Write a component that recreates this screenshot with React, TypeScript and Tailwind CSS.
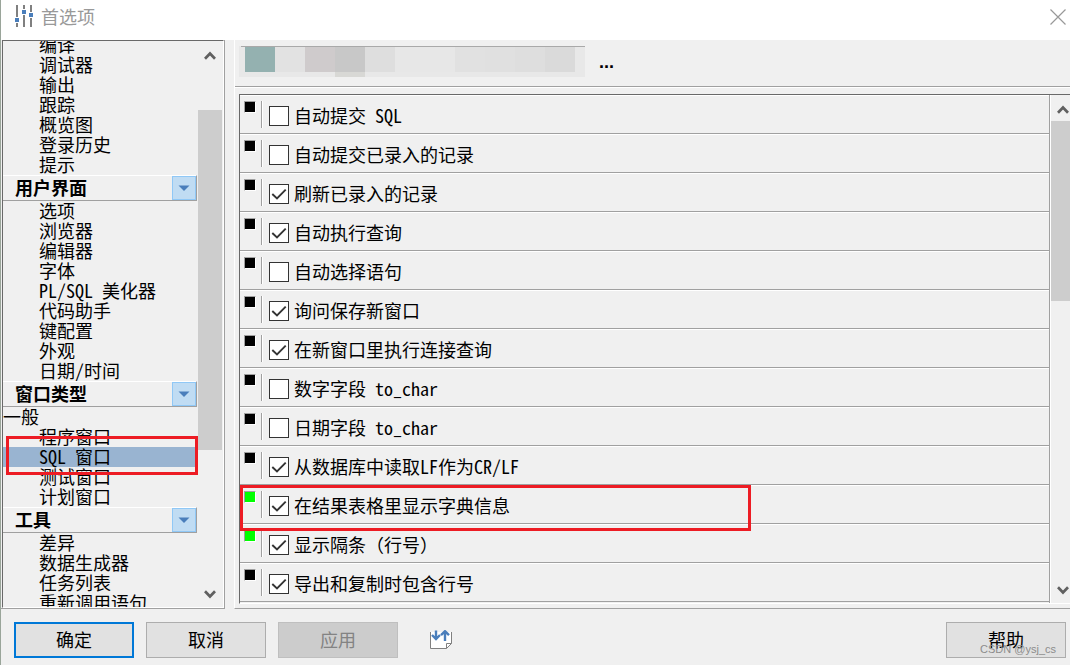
import { Fragment, type ReactNode } from "react";

type TreeEntry =
  | { kind: "group"; label: string }
  | { kind: "item"; label: string; root?: boolean; selected?: boolean };

const tree: TreeEntry[] = [
  { kind: "item", label: "编译" },
  { kind: "item", label: "调试器" },
  { kind: "item", label: "输出" },
  { kind: "item", label: "跟踪" },
  { kind: "item", label: "概览图" },
  { kind: "item", label: "登录历史" },
  { kind: "item", label: "提示" },
  { kind: "group", label: "用户界面" },
  { kind: "item", label: "选项" },
  { kind: "item", label: "浏览器" },
  { kind: "item", label: "编辑器" },
  { kind: "item", label: "字体" },
  { kind: "item", label: "PL/SQL 美化器" },
  { kind: "item", label: "代码助手" },
  { kind: "item", label: "键配置" },
  { kind: "item", label: "外观" },
  { kind: "item", label: "日期/时间" },
  { kind: "group", label: "窗口类型" },
  { kind: "item", label: "一般", root: true },
  { kind: "item", label: "程序窗口" },
  { kind: "item", label: "SQL 窗口", selected: true },
  { kind: "item", label: "测试窗口" },
  { kind: "item", label: "计划窗口" },
  { kind: "group", label: "工具" },
  { kind: "item", label: "差异" },
  { kind: "item", label: "数据生成器" },
  { kind: "item", label: "任务列表" },
  { kind: "item", label: "重新调用语句" },
];

const options = [
  { label: "自动提交 SQL", on: false },
  { label: "自动提交已录入的记录", on: false },
  { label: "刷新已录入的记录", on: true },
  { label: "自动执行查询", on: true },
  { label: "自动选择语句", on: false },
  { label: "询问保存新窗口", on: true },
  { label: "在新窗口里执行连接查询", on: true },
  { label: "数字字段 to_char", on: false },
  { label: "日期字段 to_char", on: false },
  { label: "从数据库中读取LF作为CR/LF", on: true },
  { label: "在结果表格里显示字典信息", on: true, changed: true, marked: true },
  { label: "显示隔条（行号）", on: true, changed: true },
  { label: "导出和复制时包含行号", on: true },
];

/* Latin runs use the font's half-width forms; Chinese punctuation stays full width. */
function Mixed({ text }: { text: string }) {
  return (
    <>
      {text.split(/([\x20-\x7e]+)/).map((part, i) =>
        i % 2 ? (
          <span key={i} className="[font-feature-settings:'hwid']">
            {part}
          </span>
        ) : (
          <Fragment key={i}>{part}</Fragment>
        ),
      )}
    </>
  );
}

function Chevron({ down = false }: { down?: boolean }) {
  return (
    <svg viewBox="0 0 12 10" className={down ? "h-[10px] w-3 rotate-180" : "h-[10px] w-3"} aria-hidden="true">
      <path d="M1 7.7 6 2.5 11 7.7" fill="none" stroke="#606060" strokeWidth="2.7" />
    </svg>
  );
}

function TreeRow({ entry }: { entry: TreeEntry }) {
  if (entry.kind === "group") {
    return (
      <li className="mr-px flex h-[26px] items-center justify-between border-t border-r border-b border-t-white border-r-[#a0a0a0] border-b-[#a0a0a0] pl-3">
        <span className="pb-[3px] font-bold">{entry.label}</span>
        <button
          type="button"
          aria-label={entry.label}
          className="flex h-6 w-6 items-center justify-center border border-[#90c8f6] bg-[#c0dcf3]"
        >
          <svg viewBox="0 0 12 6" className="h-[6px] w-3" aria-hidden="true">
            <path d="M0.5 0.5H11.5L6 6Z" fill="#4a7ebb" />
          </svg>
        </button>
      </li>
    );
  }
  return (
    <li className={entry.selected ? "relative mr-px bg-[#99b4d1]" : "mr-px"}>
      <a href="#" className={entry.root ? "block h-5" : "block h-5 pl-9"}>
        <Mixed text={entry.label} />
      </a>
      {entry.selected && (
        <span className="pointer-events-none absolute -top-[11px] -right-px -bottom-2 left-[3px] border-3 border-[#ed1c24]" />
      )}
    </li>
  );
}

function OptionRow({ option, id }: { option: (typeof options)[number]; id: string }) {
  return (
    <li className="relative flex h-[39px] border-t border-b border-t-white border-b-[#a0a0a0] pl-1">
      <span
        className={
          option.changed
            ? "mt-[5px] size-3 border border-t-[#a0a0a0] border-r-white border-b-white border-l-[#a0a0a0] bg-[#00ff00]"
            : "mt-[5px] size-3 border border-t-[#a0a0a0] border-r-white border-b-white border-l-[#a0a0a0] bg-black"
        }
      />
      <span className="mt-[5px] ml-[5px] h-[27px] w-[2px] border-r border-l border-r-white border-l-[#a0a0a0]" />
      <span className="relative mt-[10px] ml-[6px] size-5">
        <input
          type="checkbox"
          id={id}
          defaultChecked={option.on}
          className="peer block size-5 appearance-none border border-[#333333] bg-white"
        />
        <svg
          viewBox="0 0 20 20"
          className="pointer-events-none absolute inset-0 size-5 opacity-0 peer-checked:opacity-100"
          aria-hidden="true"
        >
          <path d="M3.3 10 8 14.5 16.7 5.7" fill="none" stroke="#333333" strokeWidth="1.9" />
        </svg>
      </span>
      <label htmlFor={id} className="mt-[10px] ml-[5px] h-[18px]">
        <Mixed text={option.label} />
      </label>
      {option.marked && (
        <span className="pointer-events-none absolute -top-px left-0 z-10 h-[46px] w-[511px] border-3 border-[#ed1c24]" />
      )}
    </li>
  );
}

function DialogButton({ tone, children }: { tone: "primary" | "plain" | "disabled"; children: ReactNode }) {
  const look = {
    primary: "border-2 border-[#0078d7] bg-[#e1e1e1]",
    plain: "border border-[#adadad] bg-[#e1e1e1]",
    disabled: "border border-[#bfbfbf] bg-[#cccccc] text-[#838383]",
  }[tone];
  return (
    <button
      type="button"
      disabled={tone === "disabled"}
      className={`flex h-9 w-[120px] items-center justify-center pb-[3px] ${look}`}
    >
      {children}
    </button>
  );
}

export default function App() {
  return (
    <div className="flex h-screen flex-col overflow-hidden border-l border-[#9aa59a] bg-[#f0f0f0] font-['Noto_Sans_CJK_SC',sans-serif] text-[18px] leading-[18px] whitespace-pre text-black">
      <header className="flex h-10 shrink-0 items-center justify-between bg-white pr-1 pb-[6px] pl-[14px]">
        <div className="flex items-center gap-[8px]">
          <svg viewBox="0 0 18 22" className="mt-[-2px] h-[22px] w-[18px]" aria-hidden="true">
            <path d="M2 0V22M9 0V22M16 0V22" stroke="#808080" strokeWidth="2" />
            <path d="M-1 12H5V18H-1ZM6 4H12V10H6ZM13 7H19V13H13Z" fill="#fff" />
            <path d="M0 13H4V17H0ZM7 5H11V9H7ZM14 8H18V12H14Z" fill="#4a7ebb" />
          </svg>
          <h1 className="pb-[2px] text-[#999999]">首选项</h1>
        </div>
        <button type="button" aria-label="关闭" className="flex size-4 items-center justify-center">
          <svg viewBox="0 0 16 16" className="size-4" aria-hidden="true">
            <path d="M0.5 0.5 15.5 15.5M15.5 0.5 0.5 15.5" stroke="#999999" strokeWidth="1.2" />
          </svg>
        </button>
      </header>

      <div className="flex min-h-0 flex-1">
        <nav className="flex w-[224px] shrink-0 border-r border-b border-[#a0a0a0]">
          <div className="ml-px flex min-h-0 flex-1 border border-t-[#696969] border-r-white border-b-white border-l-[#696969]">
            <ul className="-mt-[6px] flex-1 self-stretch overflow-hidden [clip-path:inset(6px_0_0_0)]">
              {tree.map((entry) => (
                <TreeRow key={entry.label} entry={entry} />
              ))}
            </ul>
            <div className="flex w-[25px] flex-col items-center justify-between pt-[10px] pr-px pb-2">
              <Chevron />
              <div className="mt-[49px] h-[340px] w-6 bg-[#cdcdcd]" />
              <div className="flex flex-1 items-end">
                <Chevron down />
              </div>
            </div>
          </div>
        </nav>

        <main className="ml-[9px] flex min-w-0 flex-1 flex-col border-b border-l border-b-[#a0a0a0] border-l-white">
          <div className="flex h-[47px] shrink-0 border-b border-[#a0a0a0] pt-[6px] pl-1">
            <div className="flex h-[31px] w-[346px] flex-col bg-[#e8e8e8]">
              <div className="ml-[2px] h-px bg-[#a9a9a9]" />
              <div className="flex h-[25px] pl-[6px]">
                <span className="w-[30px] bg-[#94b1b0]" />
                <span className="w-[30px] bg-[#e2e2e2]" />
                <span className="w-[30px] bg-[#cfcbcc]" />
                <span className="w-[30px] bg-[#c8c8c8]" />
                <span className="w-[30px] bg-[#dedede]" />
                <span className="w-[60px] bg-[#e7e7e7]" />
                <span className="w-[30px] bg-[#e1e1e1]" />
                <span className="w-[30px] bg-[#e0e0e0]" />
                <span className="w-[30px] bg-[#dedede]" />
                <span className="w-[30px] bg-[#dadada]" />
              </div>
              <div className="ml-24 h-[5px] w-[30px] bg-[#d8d8d5]" />
            </div>
            <button
              type="button"
              className="ml-[14px] h-8 self-start font-['Liberation_Sans',sans-serif] font-bold"
            >
              ...
            </button>
          </div>
          <div className="min-h-0 flex-1 border-t border-white pt-[6px] pb-1 pl-1">
            <div className="flex h-full border-t border-b border-l border-t-[#696969] border-b-white border-l-[#696969]">
              <ul className="min-w-0 flex-1 border-r border-[#a0a0a0]">
                {options.map((option, i) => (
                  <OptionRow key={option.label} option={option} id={`option-${i}`} />
                ))}
              </ul>
              <div className="flex w-5 flex-col items-end justify-between border-l border-white py-[8px]">
                <div className="flex h-[18px] items-start pr-px pt-[2px]">
                  <Chevron />
                </div>
                <div className="h-[180px] w-full bg-[#cdcdcd]" />
                <div className="flex flex-1 items-end pr-px">
                  <Chevron down />
                </div>
              </div>
            </div>
          </div>
        </main>
      </div>

      <footer className="flex h-14 shrink-0 items-center justify-between pt-[6px] pr-1 pl-[13px]">
        <div className="flex items-center gap-3">
          <DialogButton tone="primary">确定</DialogButton>
          <DialogButton tone="plain">取消</DialogButton>
          <DialogButton tone="disabled">应用</DialogButton>
          <button type="button" aria-label="导入导出" className="ml-5">
            <svg viewBox="0 0 22 20" className="h-5 w-[22px]" aria-hidden="true">
              <path d="M0.5 2V18.5H16.5L21.5 13.5V2Z" fill="#fff" />
              <path d="M0.5 2V18.5H16.5L21.5 13.5V2M16.5 18.5V13.5H21.5" fill="none" stroke="#808080" />
              <path
                d="M6 0.5V9.5M2 5 6 9 10 5M15 11V1M11 5.2 15 1.2 19 5.2"
                fill="none"
                stroke="#4a7ebb"
                strokeWidth="2.4"
              />
            </svg>
          </button>
        </div>
        <div className="relative">
          <DialogButton tone="plain">帮助</DialogButton>
          <span className="pointer-events-none absolute right-[10px] bottom-0 font-['Liberation_Sans',sans-serif] text-[11px] leading-[18px] text-[#8c8c8c]">
            CSDN @ysj_cs
          </span>
        </div>
      </footer>
    </div>
  );
}
